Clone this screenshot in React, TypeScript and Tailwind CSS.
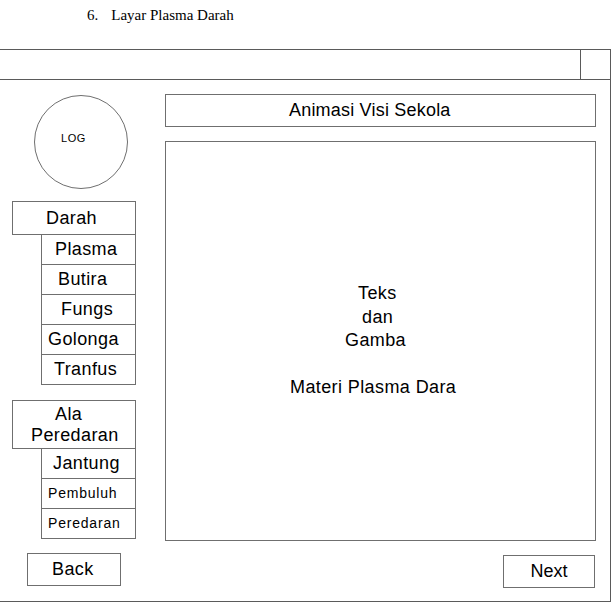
const box = "border border-[#6f6f6f] bg-white";

// label sitting at a fixed offset inside its field
const Label = ({ text, left }: { text: string; left: number }) => (
  <span className="block whitespace-nowrap" style={{ marginLeft: left }}>
    {text}
  </span>
);

const darahMenu = [
  { text: "Plasma", left: 13 },
  { text: "Butira", left: 16 },
  { text: "Fungs", left: 19 },
  { text: "Golonga", left: 6 },
  { text: "Tranfus", left: 12 },
];

const alatMenu = [
  { text: "Jantung", left: 11, small: false },
  { text: "Pembuluh", left: 6, small: true },
  { text: "Peredaran", left: 6, small: true },
];

export default function App() {
  return (
    <div className="w-[613px] h-[604px] bg-white overflow-hidden text-black">
      <div className="pt-[6px] pl-[87px] h-[49px] text-[15px] leading-[18px] font-['Liberation_Serif',serif]">
        <span>6.</span>
        <span className="ml-[13px]">Layar Plasma Darah</span>
      </div>

      <div className="-ml-[2px] w-[613px] h-[553px] border border-[#5a5a5a] font-['Liberation_Sans',Arial,sans-serif] tracking-[0.4px]">
        {/* window title bar */}
        <div className="flex h-[30px] border-b border-[#5a5a5a]">
          <div className="flex-1" />
          <div className="w-[30px] border-l border-[#5a5a5a]" />
        </div>

        <div className="flex">
          {/* side navigation */}
          <div className="w-[166px] flex flex-col">
            <div className="mt-[15px] ml-[35px] w-[94px] h-[94px] rounded-full border border-[#6f6f6f] pt-[36px] text-[11px] leading-[13px] tracking-[0.6px]">
              <Label text="LOG" left={26} />
            </div>

            <div className="mt-[12px] ml-[13px] w-[124px]">
              <div className={`${box} h-[34px] flex items-center text-[18px]`}>
                <Label text="Darah" left={33} />
              </div>
              {darahMenu.map((item) => (
                <div
                  key={item.text}
                  className={`${box} -mt-px ml-[29px] w-[95px] h-[31px] flex items-center text-[18px]`}
                >
                  <Label text={item.text} left={item.left} />
                </div>
              ))}
            </div>

            <div className="mt-[15px] ml-[13px] w-[124px]">
              <div className={`${box} h-[49px] flex flex-col justify-center text-[18px] leading-[21px]`}>
                <Label text="Ala" left={42} />
                <Label text="Peredaran" left={18} />
              </div>
              {alatMenu.map((item) => (
                <div
                  key={item.text}
                  className={`${box} -mt-px ml-[29px] w-[95px] h-[31px] flex items-center ${
                    item.small ? "text-[14px] tracking-[0.8px]" : "text-[18px]"
                  }`}
                >
                  <Label text={item.text} left={item.left} />
                </div>
              ))}
            </div>

            <div className={`${box} mt-[14px] ml-[28px] w-[94px] h-[33px] flex items-center text-[18px]`}>
              <Label text="Back" left={24} />
            </div>
          </div>

          {/* main content */}
          <div className="flex flex-col">
            <div className={`${box} mt-[14px] w-[431px] h-[33px] flex items-center text-[18px] tracking-[0.2px]`}>
              <Label text="Animasi Visi Sekola" left={123} />
            </div>
            <div className={`${box} mt-[14px] w-[431px] h-[400px] pt-[140px] text-[18px] leading-[23.5px]`}>
              <Label text="Teks" left={192} />
              <Label text="dan" left={196} />
              <Label text="Gamba" left={179} />
              <div className="h-[23.5px]" />
              <Label text="Materi Plasma Dara" left={124} />
            </div>
            <div className="flex justify-end">
              <div className={`${box} mt-[14px] mr-[1px] w-[92px] h-[33px] flex items-center justify-center text-[18px] tracking-normal`}>
                Next
              </div>
            </div>
          </div>
        </div>
      </div>
    </div>
  );
}
